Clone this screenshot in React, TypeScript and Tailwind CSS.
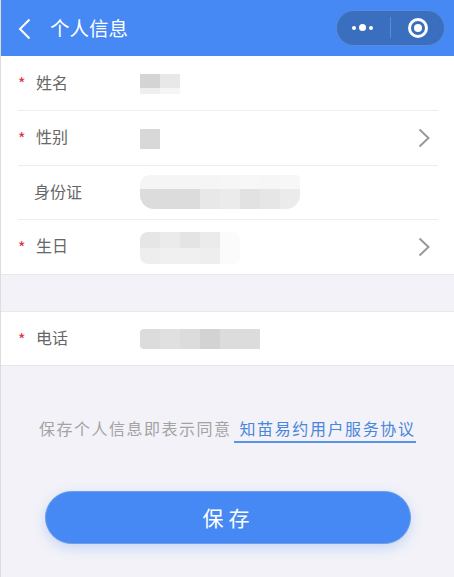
const font = { fontFamily: '"Noto Sans CJK SC", sans-serif' };

function Cells({ colors, w = 20, h }: { colors: string[]; w?: number; h: number }) {
  return (
    <div className="flex">
      {colors.map((c, i) => (
        <div key={i} style={{ width: w, height: h, backgroundColor: c }} />
      ))}
    </div>
  );
}

function Chevron() {
  return (
    <svg width="12" height="20" viewBox="0 0 12 20" fill="none" className="shrink-0">
      <path d="M1.5 1.5 L10.5 10 L1.5 18.5" stroke="#999999" strokeWidth="2" />
    </svg>
  );
}

function Row({
  label,
  required = true,
  children,
  chevron = false,
  border = true,
  lift = true,
  h,
}: {
  label: string;
  required?: boolean;
  children: React.ReactNode;
  chevron?: boolean;
  border?: boolean;
  lift?: boolean;
  h: string;
}) {
  return (
    <div className={`flex items-center ml-[17px] mr-4 ${h} ${border ? "border-b border-[#eeeeee]" : ""}`}>
      <span className="w-[18px] text-[#e02e3c] text-[16px] leading-none">{required ? "*" : ""}</span>
      <span
        className={`text-[16px] text-[#666666] w-[104px] ${lift ? "-mt-[4px]" : "-mt-[2px]"} ${required ? "" : "-ml-[2px] mr-[2px]"}`}
      >
        {label}
      </span>
      <div className="flex-1">{children}</div>
      {chevron && (
        <div className="mr-[8px]">
          <Chevron />
        </div>
      )}
    </div>
  );
}

export default function App() {
  return (
    <div style={font} className="w-[454px] h-[577px] bg-[#f2f2f8] overflow-hidden border-l border-[#dddddd]">
      <header className="h-[56px] bg-[#4688f4] flex items-center">
        <svg width="14" height="22" viewBox="0 0 14 22" fill="none" className="ml-[17px] mt-[1px]">
          <path d="M11.5 1.5 L2 11 L11.5 20.5" stroke="white" strokeWidth="2" />
        </svg>
        <span className="ml-[18px] text-[19.5px] text-white">个人信息</span>
        <div className="ml-auto mr-[9px] mb-[1px] w-[109px] h-[36px] rounded-full bg-[#3a6ebf] border border-[#5a8ad6] flex items-center">
          <div className="w-[53px] pr-[2px] flex items-center justify-center gap-[3px]">
            <span className="w-[4px] h-[4px] rounded-full bg-white" />
            <span className="w-[7px] h-[7px] rounded-full bg-white" />
            <span className="w-[4px] h-[4px] rounded-full bg-white" />
          </div>
          <div className="w-px h-[21px] bg-[#5a8ad6]" />
          <div className="flex-1 flex items-center justify-center">
            <div className="w-[20px] h-[20px] rounded-full border-[3px] border-white flex items-center justify-center">
              <span className="w-[8px] h-[8px] rounded-full bg-white" />
            </div>
          </div>
        </div>
      </header>

      <section className="bg-white border-b border-[#e8e8ec]">
        <Row label="姓名" lift={false} h="h-[55px]">
          <div className="w-[40px] mt-[2px]">
            <Cells h={14} colors={["#d4d4d4", "#e8e8e8"]} />
            <Cells h={6} colors={["#efefef", "#f5f5f5"]} />
          </div>
        </Row>
        <Row label="性别" chevron h="h-[55px]">
          <div className="mt-[1px]">
            <Cells h={20} colors={["#d8d8d8"]} />
          </div>
        </Row>
        <Row label="身份证" required={false} h="h-[54px]">
          <div className="w-[160px] -mt-[2px] rounded-b-[14px] rounded-tl-[10px] rounded-tr-[4px] overflow-hidden">
            <Cells h={14} colors={["#f5f5f5", "#f5f5f5", "#f5f5f5", "#f5f5f5", "#f6f6f6", "#f7f7f7", "#f6f6f6", "#f7f7f7"]} />
            <Cells h={20} colors={["#dcdcdc", "#dcdcdc", "#dcdcdc", "#e8e8e8", "#ebebeb", "#e2e2e2", "#e6e6e6", "#ebebeb"]} />
          </div>
        </Row>
        <Row label="生日" chevron border={false} h="h-[54px]">
          <div className="w-[100px] mt-[2px] rounded-l-[8px] rounded-tr-[8px] rounded-br-[6px] overflow-hidden">
            <Cells h={16} colors={["#e6e6e6", "#ebebeb", "#e4e4e4", "#ebebeb", "#fbfbfb"]} />
            <Cells h={16} colors={["#eeeeee", "#f0f0f0", "#f0f0f0", "#eeeeee", "#fbfbfb"]} />
          </div>
        </Row>
      </section>

      <section className="mt-[36px] bg-white border-y border-[#e8e8ec]">
        <Row label="电话" border={false} h="h-[53px]">
          <div className="w-[120px] rounded-l-[4px] overflow-hidden">
            <Cells h={20} colors={["#dcdcdc", "#e0e0e0", "#dcdcdc", "#d3d3d3", "#dcdcdc", "#dcdcdc"]} />
          </div>
        </Row>
      </section>

      <div className="mt-[49px] flex items-start whitespace-nowrap ml-[38px] text-[16px] leading-[26px] tracking-[1.5px]">
        <span className="text-[#a3a3a3]">保存个人信息即表示同意</span>
        <span className="ml-[2px] pl-[6px] text-[#4a86dc] border-b-2 border-[#5a94ea] tracking-[1.6px]">知苗易约用户服务协议</span>
      </div>

      <button className="block mt-[48px] ml-[44px] w-[366px] h-[53px] pl-[1px] rounded-full bg-[#4688f4] text-white text-[21px] tracking-[5px] border border-[#6d9ee8] shadow-[0_4px_12px_rgba(70,136,244,0.25)]">
        保存
      </button>
    </div>
  );
}
